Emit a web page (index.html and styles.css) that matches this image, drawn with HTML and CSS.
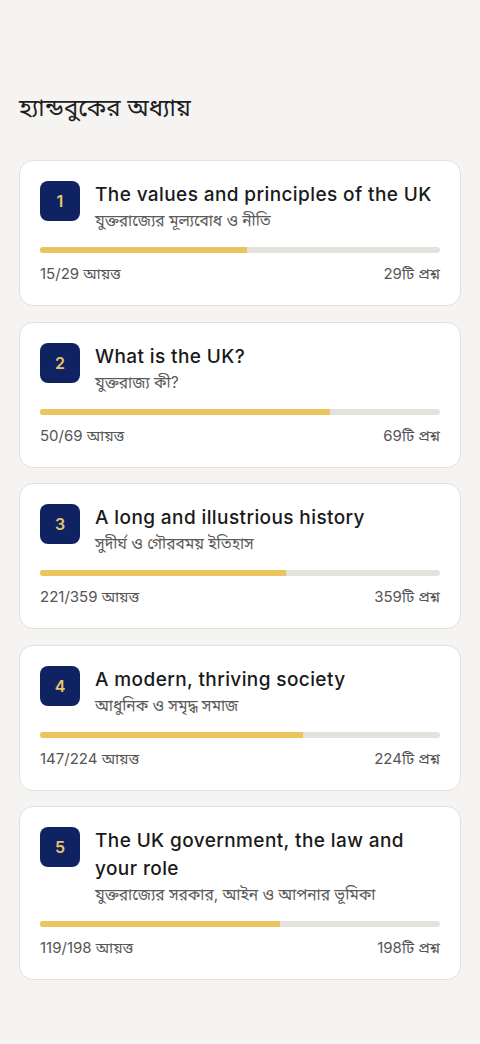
FILE: index.html
```html
<!DOCTYPE html>
<html lang="bn">
<head>
	<meta charset="UTF-8">
	<title>হ্যান্ডবুকের অধ্যায়</title>
	<link rel="stylesheet" href="styles.css">
</head>
<body>
<div class="page">
	<h1 class="heading">হ্যান্ডবুকের অধ্যায়</h1>

	<div class="chapters">
		<div class="card">
			<div class="top">
				<span class="num">1</span>
				<div class="titles">
					<div class="title">The values and principles of the UK</div>
					<div class="sub">যুক্তরাজ্যের মূল্যবোধ ও নীতি</div>
				</div>
			</div>
			<div class="bar"><div class="fill" style="width:51.72%"></div></div>
			<div class="foot">
				<span>15/29 আয়ত্ত</span>
				<span>29টি প্রশ্ন</span>
			</div>
		</div>

		<div class="card">
			<div class="top">
				<span class="num">2</span>
				<div class="titles">
					<div class="title">What is the UK?</div>
					<div class="sub">যুক্তরাজ্য কী?</div>
				</div>
			</div>
			<div class="bar"><div class="fill" style="width:72.46%"></div></div>
			<div class="foot">
				<span>50/69 আয়ত্ত</span>
				<span>69টি প্রশ্ন</span>
			</div>
		</div>

		<div class="card">
			<div class="top">
				<span class="num">3</span>
				<div class="titles">
					<div class="title">A long and illustrious history</div>
					<div class="sub">সুদীর্ঘ ও গৌরবময় ইতিহাস</div>
				</div>
			</div>
			<div class="bar"><div class="fill" style="width:61.56%"></div></div>
			<div class="foot">
				<span>221/359 আয়ত্ত</span>
				<span>359টি প্রশ্ন</span>
			</div>
		</div>

		<div class="card">
			<div class="top">
				<span class="num">4</span>
				<div class="titles">
					<div class="title">A modern, thriving society</div>
					<div class="sub">আধুনিক ও সমৃদ্ধ সমাজ</div>
				</div>
			</div>
			<div class="bar"><div class="fill" style="width:65.63%"></div></div>
			<div class="foot">
				<span>147/224 আয়ত্ত</span>
				<span>224টি প্রশ্ন</span>
			</div>
		</div>

		<div class="card">
			<div class="top">
				<span class="num">5</span>
				<div class="titles">
					<div class="title">The UK government, the law and your role</div>
					<div class="sub">যুক্তরাজ্যের সরকার, আইন ও আপনার ভূমিকা</div>
				</div>
			</div>
			<div class="bar"><div class="fill" style="width:60.1%"></div></div>
			<div class="foot">
				<span>119/198 আয়ত্ত</span>
				<span>198টি প্রশ্ন</span>
			</div>
		</div>
	</div>
</div>
</body>
</html>
```

FILE: styles.css
```css
*{
	margin: 0;
	padding: 0;
	box-sizing: border-box;
}
body {
	background: #f5f4f2;
	font-family: Inter, "Noto Sans", "Noto Sans Bengali", sans-serif;
	color: #1c1c1c;
}
.page {
	padding: 90px 19px 40px 19px;
}
.heading {
	font-size: 24px;
	font-weight: 400;
	line-height: 36px;
	color: #1e1e1e;
	margin-bottom: 34px;
}
.chapters {
	display: flex;
	flex-direction: column;
	gap: 15.5px;
}
.card {
	background: #fff;
	border: 1px solid #e3e0db;
	border-radius: 14px;
	padding: 20px;
}
.top {
	display: flex;
	gap: 15px;
	align-items: flex-start;
}
.num {
	flex: none;
	width: 40px;
	height: 40px;
	border-radius: 8px;
	background: #0f2363;
	color: #e8c56a;
	font-size: 16px;
	font-weight: 600;
	display: flex;
	align-items: center;
	justify-content: center;
}
.titles {
	flex: 1;
	min-width: 0;
}
.title {
	font-size: 19px;
	font-weight: 500;
	letter-spacing: 0.4px;
	line-height: 28px;
	color: #1a1a1a;
}
.sub {
	font-size: 15.5px;
	line-height: 24px;
	color: #5a5a5a;
}
.bar {
	margin-top: 14px;
	height: 6px;
	border-radius: 3px;
	background: #e3e2dd;
	overflow: hidden;
}
.fill {
	height: 100%;
	background: #eac45f;
}
.foot {
	margin-top: 10px;
	display: flex;
	justify-content: space-between;
	font-size: 15px;
	line-height: 22px;
	color: #555;
}
```
